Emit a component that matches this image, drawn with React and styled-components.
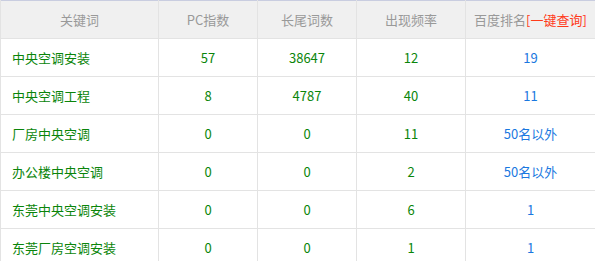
import React from "react";
import styled, { createGlobalStyle } from "styled-components";

const Global = createGlobalStyle`
  html, body { margin: 0; padding: 0; background: #fff; }
  body { font-family: "Noto Sans CJK SC", "Noto Sans", sans-serif; }
`;

const Table = styled.table`
  width: 595px;
  table-layout: fixed;
  border-collapse: collapse;
  font-size: 13px;
  border-top: 1px solid #c9cde0;
`;

const HeadCell = styled.th`
  height: 37px;
  padding: 0;
  background: #f0f0f0;
  color: #999;
  font-weight: normal;
  text-align: center;
  border: 1px solid #e3e3e3;
  border-top: none;
  white-space: nowrap;
`;

const Cell = styled.td`
  height: 37px;
  padding: 0;
  padding-left: ${(p) => (p.$left ? "11px" : "0")};
  text-align: ${(p) => (p.$left ? "left" : "center")};
  color: ${(p) => (p.$blue ? "#1a78e0" : "#0a850a")};
  border: 1px solid #e3e3e3;
  white-space: nowrap;
`;

const Query = styled.span`
  color: #ff3a1a;
`;

const rows = [
  ["中央空调安装", "57", "38647", "12", "19"],
  ["中央空调工程", "8", "4787", "40", "11"],
  ["厂房中央空调", "0", "0", "11", "50名以外"],
  ["办公楼中央空调", "0", "0", "2", "50名以外"],
  ["东莞中央空调安装", "0", "0", "6", "1"],
  ["东莞厂房空调安装", "0", "0", "1", "1"],
];

export default function App() {
  return (
    <>
      <Global />
      <Table>
        <colgroup>
          <col style={{ width: 158 }} />
          <col style={{ width: 99 }} />
          <col style={{ width: 99 }} />
          <col style={{ width: 109 }} />
          <col style={{ width: 130 }} />
        </colgroup>
        <thead>
          <tr>
            <HeadCell>关键词</HeadCell>
            <HeadCell>PC指数</HeadCell>
            <HeadCell>长尾词数</HeadCell>
            <HeadCell>出现频率</HeadCell>
            <HeadCell>
              百度排名<Query>[一键查询]</Query>
            </HeadCell>
          </tr>
        </thead>
        <tbody>
          {rows.map((r) => (
            <tr key={r[0]}>
              <Cell $left>{r[0]}</Cell>
              <Cell>{r[1]}</Cell>
              <Cell>{r[2]}</Cell>
              <Cell>{r[3]}</Cell>
              <Cell $blue>{r[4]}</Cell>
            </tr>
          ))}
        </tbody>
      </Table>
    </>
  );
}
